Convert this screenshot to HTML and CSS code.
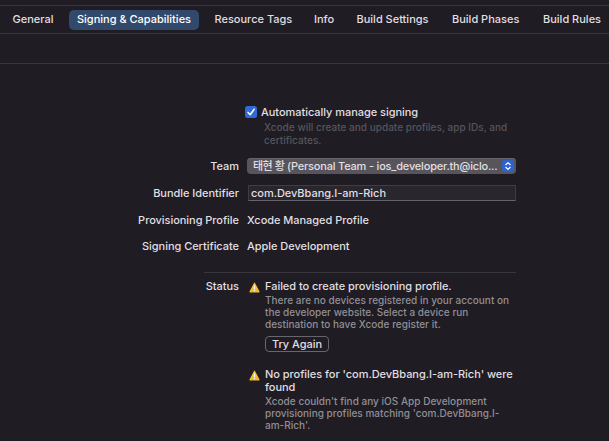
FILE: index.html
```html
<!DOCTYPE html>
<html lang="en">
<head>
<meta charset="utf-8">
<title>Signing &amp; Capabilities</title>
<link rel="stylesheet" href="styles.css">
</head>
<body>
<nav class="tabs">
  <span class="tab general">General</span>
  <span class="tab active">Signing &amp; Capabilities</span>
  <span class="tab resource">Resource Tags</span>
  <span class="tab info">Info</span>
  <span class="tab settings">Build Settings</span>
  <span class="tab phases">Build Phases</span>
  <span class="tab rules">Build Rules</span>
</nav>
<div class="toolbar"></div>
<main class="form">
  <div class="auto">
    <svg class="checkbox" viewBox="0 0 12 12"><rect width="12" height="12" rx="2.5" fill="#3069d8"/><path d="M3 6.4 5.2 8.8 9.1 3.2" fill="none" stroke="#fff" stroke-width="1.5" stroke-linecap="round" stroke-linejoin="round"/></svg>
    <span class="auto-label">Automatically manage signing</span>
  </div>
  <p class="hint">Xcode will create and update profiles, app IDs, and<br>certificates.</p>
  <div class="row team">
    <span class="label">Team</span>
    <div class="select"><span class="select-text"><span class="korean">태현 황</span> (Personal Team - ios_developer.th@iclo...</span>
      <svg class="stepper" viewBox="0 0 12 12"><rect width="12" height="12" rx="3" fill="#2d62d3"/><path d="M3.8 4.7 6 2.6 8.2 4.7M3.8 7.3 6 9.4 8.2 7.3" fill="none" stroke="#fff" stroke-width="1.2" stroke-linecap="round" stroke-linejoin="round"/></svg>
    </div>
  </div>
  <div class="row bundle">
    <span class="label">Bundle Identifier</span>
    <div class="input"><span>com.DevBbang.I-am-Rich</span></div>
  </div>
  <div class="row profile"><span class="label">Provisioning Profile</span><span class="value">Xcode Managed Profile</span></div>
  <div class="row cert"><span class="label">Signing Certificate</span><span class="value">Apple Development</span></div>
  <section class="status">
    <span class="status-label">Status</span>
    <div class="issues">
      <div class="issue">
        <svg class="warn" viewBox="0 0 11 11"><path d="M5.5 1.2 10 9.8H1Z" fill="#f3bd2f" stroke="#f3bd2f" stroke-width="1.2" stroke-linejoin="round"/><path d="M5.5 3.4V7M5.5 8.1V9.3" stroke="#fff" stroke-width="1.3"/></svg>
        <div class="issue-body">
          <p class="title">Failed to create provisioning profile.</p>
          <p class="detail">There are no devices registered in your account on<br>the developer website. Select a device run<br>destination to have Xcode register it.</p>
          <span class="button">Try Again</span>
        </div>
      </div>
      <div class="issue second">
        <svg class="warn" viewBox="0 0 11 11"><path d="M5.5 1.2 10 9.8H1Z" fill="#f3bd2f" stroke="#f3bd2f" stroke-width="1.2" stroke-linejoin="round"/><path d="M5.5 3.4V7M5.5 8.1V9.3" stroke="#fff" stroke-width="1.3"/></svg>
        <div class="issue-body">
          <p class="title">No profiles for 'com.DevBbang.I-am-Rich' were<br>found</p>
          <p class="detail">Xcode couldn't find any iOS App Development<br>provisioning profiles matching 'com.DevBbang.I-<br>am-Rich'.</p>
        </div>
      </div>
    </div>
  </section>
</main>
</body>
</html>
```
FILE: styles.css
```css
* { box-sizing: border-box; }
body {
  margin: 0;
  padding-top: 5px;
  width: 609px;
  height: 441px;
  overflow: hidden;
  background: #1f1c24;
  color: #e0dfe1;
  font: 500 11px/13px Inter, "Noto Sans CJK KR", sans-serif;
  letter-spacing: -0.04px;
  white-space: nowrap;
}
p { margin: 0; }
.tabs {
  display: flex;
  align-items: center;
  height: 29px;
  padding: 0 0 0 12.5px;
  border-top: 1px solid #38353c;
  border-bottom: 1px solid #38353c;
  letter-spacing: 0;
}
.tab { flex: none; height: 20px; line-height: 18px; }
.general { width: 56.5px; }
.active {
  width: 130px;
  margin-right: 15.5px;
  border-radius: 5px;
  background: #314a6b;
  color: #fff;
  text-align: center;
}
.resource { width: 99.5px; }
.info { width: 42.5px; }
.settings { width: 95.5px; }
.phases { width: 91px; }
.toolbar { height: 30px; border-bottom: 1px solid #38353c; }
.form { padding-top: 42px; }
.auto { display: flex; align-items: center; height: 12px; padding-left: 245px; gap: 4px; }
.checkbox { width: 12px; height: 12px; }
.hint {
  margin: 3px 0 0 264px;
  color: #57545b;
  font-size: 10px;
  letter-spacing: 0.02px;
}
.row { display: flex; align-items: center; height: 16px; }
.label { width: 239px; margin-right: 8px; text-align: right; }
.team { margin-top: 11px; }
.select {
  display: flex;
  align-items: center;
  justify-content: space-between;
  width: 269px;
  height: 16px;
  padding: 0 2px 0 6px;
  border-radius: 4px;
  background: #57555b;
  box-shadow: inset 0 1px #68666c;
}
.select-text { letter-spacing: -0.19px; }
.korean { letter-spacing: -0.5px; }
.stepper { flex: none; width: 12px; height: 12px; }
.bundle { margin-top: 11px; }
.input {
  width: 268px;
  height: 16px;
  margin-left: 1px;
  padding-left: 2px;
  border: 1px solid #3f3c43;
  border-bottom-color: #66646a;
  background: #29262e;
  line-height: 14px;
}
.profile { margin-top: 11px; }
.cert { margin-top: 10px; }
.status {
  display: flex;
  width: 312px;
  margin: 18px 0 0 204px;
  padding-top: 7px;
  border-top: 1px solid #38353c;
}
.status-label { flex: none; width: 35px; text-align: right; }
.issues { margin-left: 10px; }
.issue { display: flex; }
.warn { flex: none; width: 11px; height: 11px; margin: 2px 5px 0 0; }
.detail {
  margin-top: 1px;
  color: #918f95;
  font-size: 10px;
  line-height: 12px;
  letter-spacing: 0.02px;
}
.button {
  display: block;
  width: 64px;
  height: 16px;
  margin-top: 6px;
  border: 1px solid #68666c;
  border-radius: 4px;
  line-height: 14px;
  text-align: center;
}
.second { margin-top: 16px; }
```
